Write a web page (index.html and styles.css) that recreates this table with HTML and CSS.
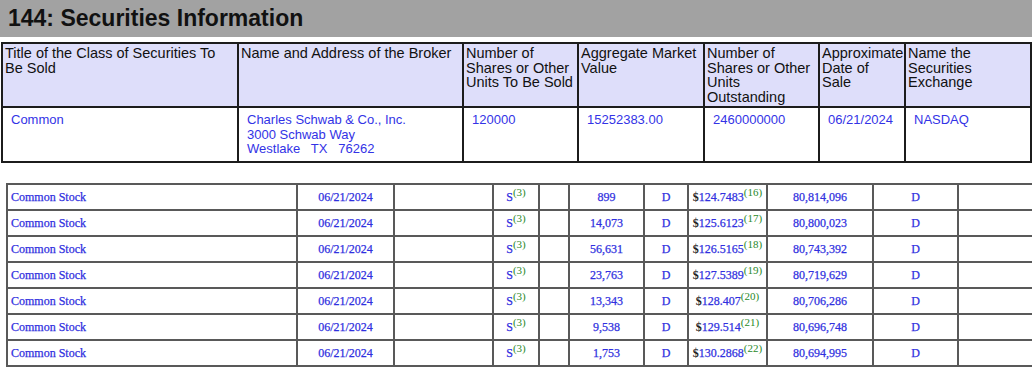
FILE: index.html
```html
<!DOCTYPE html>
<html>
<head>
<meta charset="utf-8">
<link rel="stylesheet" href="styles.css">
</head>
<body>
<div class="section-title">144: Securities Information</div>
<table class="info">
  <colgroup>
    <col style="width:236px"><col style="width:225px"><col style="width:115px"><col style="width:126px"><col style="width:115px"><col style="width:86px"><col style="width:126px">
  </colgroup>
  <tr class="head">
    <th>Title of the Class of Securities To Be Sold</th>
    <th>Name and Address of the Broker</th>
    <th>Number of Shares or Other Units To Be Sold</th>
    <th>Aggregate Market Value</th>
    <th>Number of Shares or Other Units Outstanding</th>
    <th>Approximate Date of Sale</th>
    <th>Name the Securities Exchange</th>
  </tr>
  <tr class="data">
    <td>Common</td>
    <td>Charles Schwab &amp; Co., Inc.<br>3000 Schwab Way<br>Westlake&nbsp;&nbsp; TX&nbsp;&nbsp; 76262</td>
    <td>120000</td>
    <td>15252383.00</td>
    <td>2460000000</td>
    <td>06/21/2024</td>
    <td>NASDAQ</td>
  </tr>
</table>

<div class="trans-wrap">
<table class="trans">
  <colgroup>
    <col style="width:290px"><col style="width:97px"><col style="width:99px"><col style="width:46px"><col style="width:30px"><col style="width:75px"><col style="width:44px"><col style="width:79px"><col style="width:106px"><col style="width:85px"><col style="width:110px">
  </colgroup>
  <tr><td class="l">Common Stock</td><td>06/21/2024</td><td></td><td>S<sup>(3)</sup></td><td></td><td>899</td><td>D</td><td class="price"><b>$</b>124.7483<sup>(16)</sup></td><td>80,814,096</td><td>D</td><td></td></tr>
  <tr><td class="l">Common Stock</td><td>06/21/2024</td><td></td><td>S<sup>(3)</sup></td><td></td><td>14,073</td><td>D</td><td class="price"><b>$</b>125.6123<sup>(17)</sup></td><td>80,800,023</td><td>D</td><td></td></tr>
  <tr><td class="l">Common Stock</td><td>06/21/2024</td><td></td><td>S<sup>(3)</sup></td><td></td><td>56,631</td><td>D</td><td class="price"><b>$</b>126.5165<sup>(18)</sup></td><td>80,743,392</td><td>D</td><td></td></tr>
  <tr><td class="l">Common Stock</td><td>06/21/2024</td><td></td><td>S<sup>(3)</sup></td><td></td><td>23,763</td><td>D</td><td class="price"><b>$</b>127.5389<sup>(19)</sup></td><td>80,719,629</td><td>D</td><td></td></tr>
  <tr><td class="l">Common Stock</td><td>06/21/2024</td><td></td><td>S<sup>(3)</sup></td><td></td><td>13,343</td><td>D</td><td class="price"><b>$</b>128.407<sup>(20)</sup></td><td>80,706,286</td><td>D</td><td></td></tr>
  <tr><td class="l">Common Stock</td><td>06/21/2024</td><td></td><td>S<sup>(3)</sup></td><td></td><td>9,538</td><td>D</td><td class="price"><b>$</b>129.514<sup>(21)</sup></td><td>80,696,748</td><td>D</td><td></td></tr>
  <tr><td class="l">Common Stock</td><td>06/21/2024</td><td></td><td>S<sup>(3)</sup></td><td></td><td>1,753</td><td>D</td><td class="price"><b>$</b>130.2868<sup>(22)</sup></td><td>80,694,995</td><td>D</td><td></td></tr>
</table>
</div>
</body>
</html>
```

FILE: styles.css
```css
html, body {
  margin: 0;
  padding: 0;
  background: #fff;
  overflow: hidden;
}

body {
  width: 1032px;
  height: 376px;
}

.section-title {
  height: 37px;
  background: #a2a2a2;
  font-family: "Liberation Sans", Arial, sans-serif;
  font-weight: bold;
  font-size: 23px;
  line-height: 37px;
  color: #111;
  padding-left: 8px;
  margin-bottom: 5px;
}

.info {
  border-collapse: collapse;
  margin-left: 1px;
  width: 1030px;
  table-layout: fixed;
  font-family: "Liberation Sans", Arial, sans-serif;
  border: 2px solid #1c1c1c;
}

.info th, .info td {
  border: 2px solid #1c1c1c;
  vertical-align: top;
  text-align: left;
}

.info th {
  background: #dedefa;
  color: #111;
  font-weight: normal;
  font-size: 14.5px;
  line-height: 14.7px;
  height: 59px;
  padding: 2px 3px 1px 2px;
}

.info td {
  color: #3333e6;
  font-size: 13px;
  line-height: 14.6px;
  height: 44px;
  padding: 5px 4px 4px 8px;
}

.trans-wrap {
  margin-top: 20px;
  margin-left: 6px;
  width: 1100px;
}

.trans {
  border-collapse: collapse;
  table-layout: fixed;
  width: 1061px;
  font-family: "Liberation Serif", "Times New Roman", serif;
  font-size: 12px;
  color: #3030e0;
  border: 2px solid #595959;
}

.trans td {
  border: 2px solid #595959;
  height: 24px;
  padding: 0 2px;
  text-align: center;
  vertical-align: middle;
  white-space: nowrap;
  -webkit-text-stroke: 0.25px #3030e0;
}

.trans td.l {
  text-align: left;
  padding-left: 3px;
}

.trans sup {
  color: #2a8a2a;
  -webkit-text-stroke: 0;
  font-size: 11px;
  line-height: 0;
  vertical-align: 5px;
}

.trans .price b {
  color: #222;
  -webkit-text-stroke: 0;
  font-weight: bold;
}
```
